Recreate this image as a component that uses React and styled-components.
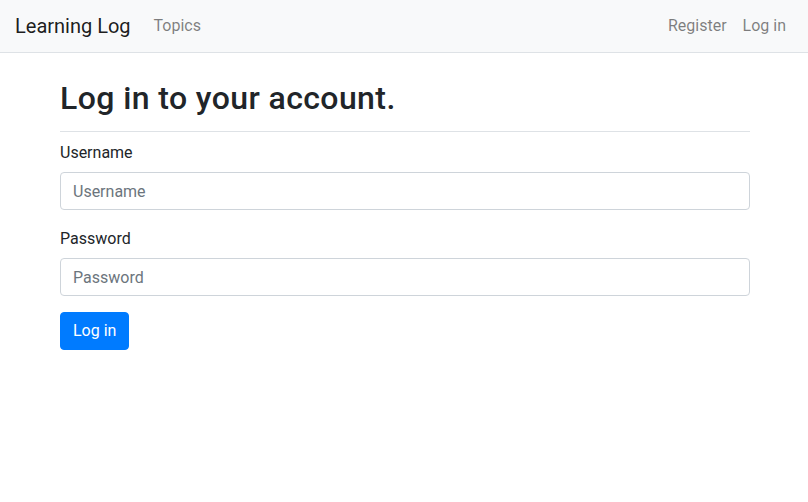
import React from 'react'
import styled, { createGlobalStyle } from 'styled-components'

const GlobalStyle = createGlobalStyle`
    *, *::before, *::after {
        box-sizing: border-box;
    }

    body {
        margin: 0;
        font-family: Roboto, "Noto Sans", sans-serif;
        font-size: 16px;
        line-height: 1.5;
        color: #212529;
        background-color: #fff;
    }
`

const App = () => {
    return (
        <>
            <GlobalStyle />
            <Navbar>
                <Brand href="#">Learning Log</Brand>
                <NavList>
                    <NavLink href="#">Topics</NavLink>
                </NavList>
                <NavList $right>
                    <NavLink href="#">Register</NavLink>
                    <NavLink href="#">Log in</NavLink>
                </NavList>
            </Navbar>

            <Container>
                <Header>
                    <h2>Log in to your account.</h2>
                </Header>

                <form onSubmit={(e) => e.preventDefault()}>
                    <FormGroup>
                        <label htmlFor="id_username">Username</label>
                        <Input id="id_username" type="text" placeholder="Username" />
                    </FormGroup>

                    <FormGroup>
                        <label htmlFor="id_password">Password</label>
                        <Input id="id_password" type="password" placeholder="Password" />
                    </FormGroup>

                    <Button type="submit">Log in</Button>
                </form>
            </Container>
        </>
    )
}

export default App

const Navbar = styled.nav`
    display: flex;
    align-items: center;
    height: 53px;
    padding: 0 14px 0 15px;
    background-color: #f8f9fa;
    border-bottom: 1px solid #dee2e6;
`

const Brand = styled.a`
    font-size: 20px;
    line-height: 30px;
    color: rgba(0, 0, 0, 0.9);
    text-decoration: none;
    margin-right: 15px;
`

const NavList = styled.div`
    display: flex;
    margin-left: ${(p) => (p.$right ? 'auto' : '0')};
`

const NavLink = styled.a`
    padding: 0 8px;
    font-size: 16px;
    color: rgba(0, 0, 0, 0.5);
    text-decoration: none;
`

const Container = styled.main`
    max-width: 720px;
    margin: 0 auto;
    padding: 24px 14px 0 16px;
`

const Header = styled.div`
    padding-bottom: 8px;
    margin-bottom: 8px;
    border-bottom: 1px solid #dee2e6;

    h2 {
        margin: 0 0 8px;
        font-size: 32px;
        font-weight: 500;
        line-height: 1.2;
        letter-spacing: 0.4px;
        padding-top: 2px;
        height: 38.4px;
    }
`

const FormGroup = styled.div`
    margin-bottom: 16px;

    label {
        display: inline-block;
        margin-bottom: 8px;
        padding-top: 1px;
        height: 24px;
    }
`

const Input = styled.input`
    display: block;
    width: 100%;
    height: 38px;
    padding: 6px 12px;
    font-family: inherit;
    font-size: 16px;
    line-height: 1.5;
    color: #495057;
    background-color: #fff;
    border: 1px solid #ced4da;
    border-radius: 4px;
    outline: none;

    &::placeholder {
        color: #6c757d;
        opacity: 1;
    }
`

const Button = styled.button`
    display: inline-block;
    height: 38px;
    padding: 6px 12px;
    font-family: inherit;
    font-size: 16px;
    line-height: 1.5;
    color: #fff;
    background-color: #007bff;
    border: 1px solid #007bff;
    border-radius: 4px;
    cursor: pointer;
`
